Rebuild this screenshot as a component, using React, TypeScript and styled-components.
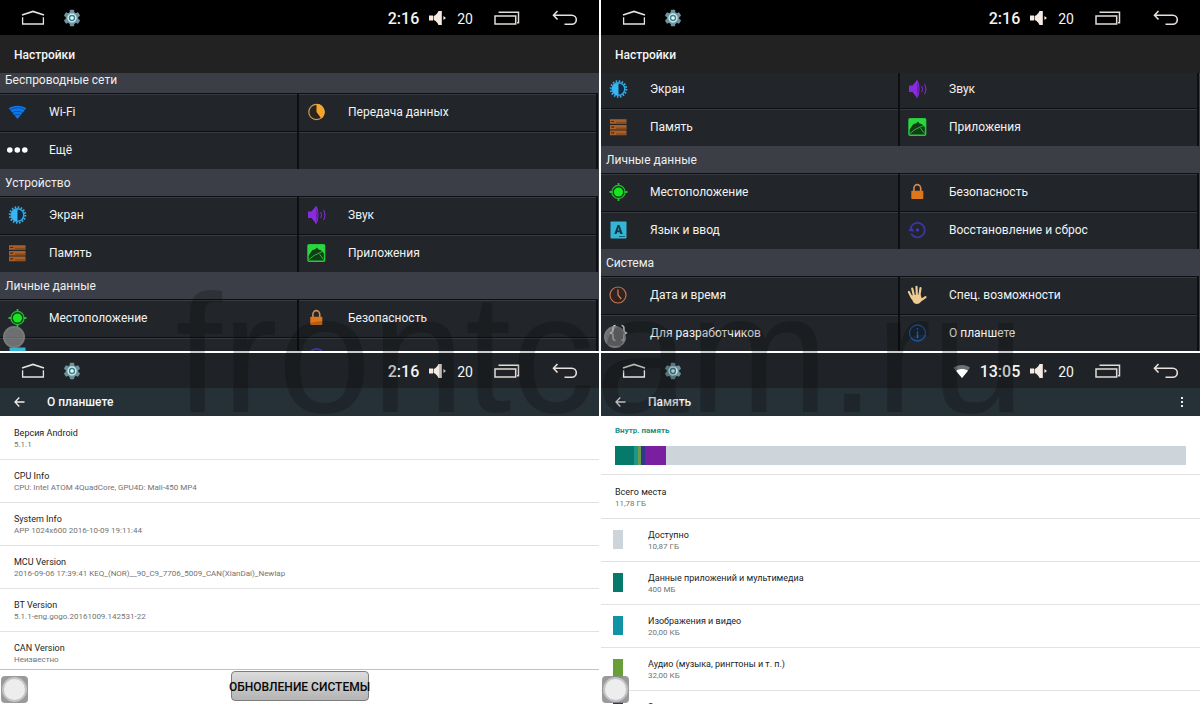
import React from "react";
import styled, { createGlobalStyle } from "styled-components";

const GlobalStyle = createGlobalStyle`
  * { box-sizing: border-box; }
  body { margin: 0; background: #fff; font-family: Roboto, "Liberation Sans", sans-serif; }
  button { font: inherit; color: inherit; background: none; border: 0; padding: 0; margin: 0; text-align: left; cursor: pointer; }
  h1, h2, dl, dt, dd, ul { margin: 0; padding: 0; font-weight: inherit; list-style: none; }
  svg { display: block; flex: none; }
`;

/* ---------- layout ---------- */

const Board = styled.main`
  position: relative;
  display: grid;
  grid-template-columns: repeat(2, minmax(0, 1fr));
  grid-template-rows: repeat(2, minmax(0, 1fr));
  gap: 2px;
  height: 100vh;
  overflow: hidden;
`;

const Pane = styled.section<{ $light?: boolean }>`
  position: relative;
  display: flex;
  flex-direction: column;
  min-height: 0;
  overflow: hidden;
  background: ${(p) => (p.$light ? "#fff" : "#22262a")};
`;

const Watermark = styled.div`
  position: absolute;
  top: 270px;
  left: 0;
  right: 0;
  z-index: 5;
  text-align: center;
  font: 168px/168px "Liberation Sans", sans-serif;
  color: rgba(0, 0, 0, 0.2);
  pointer-events: none;
`;

/* ---------- status bar ---------- */

const StatusBar = styled.header<{ $light?: boolean }>`
  display: flex;
  align-items: center;
  flex: none;
  height: 35px;
  padding: 0 21px;
  background: ${(p) => (p.$light ? "#1f2327" : "#000")};
  color: #f4f4f4;
`;

const StatusGroup = styled.div<{ $gap: number }>`
  display: flex;
  align-items: center;
  gap: ${(p) => p.$gap}px;
`;

const Spacer = styled.div`
  flex: 1;
`;

const Clock = styled.time`
  padding-top: 2px;
  font-size: 16px;
  line-height: 20px;
  font-weight: 500;
`;

const Volume = styled.span`
  margin-right: 21px;
  padding-top: 2px;
  font-size: 14px;
  line-height: 20px;
`;

/* ---------- title bars ---------- */

const TitleBar = styled.div<{ $compact?: boolean }>`
  display: flex;
  align-items: center;
  flex: none;
  height: ${(p) => (p.$compact ? 28 : 38)}px;
  padding: ${(p) => (p.$compact ? 0 : 2)}px 16px 0 14px;
  background: ${(p) => (p.$compact ? "#263037" : "#222")};
  color: #f6f6f6;
`;

const Title = styled.h1`
  flex: 1;
  font-size: 12px;
  line-height: 16px;
  font-weight: 500;
`;

const BackSlot = styled.button`
  width: 33px;
`;

/* ---------- settings grid ---------- */

const SettingsList = styled.div<{ $scroll: number }>`
  flex: 1;
  min-height: 0;
  overflow: hidden;

  & > :first-child {
    margin-top: -${(p) => p.$scroll}px;
  }
`;

const SectionHeader = styled.h2`
  height: 27px;
  padding-left: 5px;
  background: #3b3e47;
  color: #eee;
  font-size: 12px;
  line-height: 29px;
`;

const CellGrid = styled.div`
  display: grid;
  grid-template-columns: 1fr 1fr;
  padding-right: 1px;
  background: #3b3e47;
`;

const Cell = styled.button`
  display: flex;
  align-items: center;
  gap: 21px;
  height: 38px;
  padding: 0 0 2px 6px;
  border: solid #0e0f11;
  border-width: 1px 2px 0 0;
  box-shadow: inset 0 1px #373b3f;
  background: #22262a;
  color: #f2f2f2;
  font-size: 12px;
  line-height: 16px;
`;

/* ---------- light lists ---------- */

const InfoList = styled.dl`
  flex: 1;
  min-height: 0;
  padding-top: 1px;
  overflow: hidden;
`;

const Row = styled.div<{ $indent?: boolean }>`
  display: flex;
  align-items: center;
  height: 43px;
  padding-left: ${(p) => (p.$indent ? 12 : 14)}px;
  border-bottom: 1px solid #e2e2e2;
`;

const RowText = styled.div`
  padding-top: 2px;
`;

const RowTitle = styled.dt`
  color: #1c1c1c;
  font-size: 9px;
  line-height: 12px;
`;

const RowValue = styled.dd`
  color: #737373;
  font-size: 8px;
  line-height: 12px;
`;

const Swatch = styled.span<{ $color: string }>`
  width: 10px;
  height: 19px;
  margin: 0 25px 2px 0;
  background: ${(p) => p.$color};
`;

const Footer = styled.footer`
  display: flex;
  justify-content: center;
  flex: none;
  height: 35px;
  padding: 1px 0 3px;
  border-top: 1px solid #c2c2c2;
`;

const UpdateButton = styled.button`
  display: flex;
  align-items: center;
  justify-content: center;
  width: 138px;
  padding-top: 2px;
  border: 1px solid #7d7d7d;
  border-radius: 4px;
  background: linear-gradient(#dcdcdc, #b4b4b4);
  color: #080808;
  font-size: 12px;
  line-height: 16px;
  font-weight: 500;
  white-space: nowrap;
`;

const MemorySummary = styled.div`
  flex: none;
  height: 59px;
  padding: 9px 14px 0;
  border-bottom: 1px solid #e2e2e2;
`;

const MemoryLabel = styled.h2`
  margin-bottom: 9px;
  color: #1c8f86;
  font-size: 8px;
  line-height: 12px;
  font-weight: 700;
`;

const MemoryBar = styled.div`
  display: flex;
  height: 19px;
`;

const Segment = styled.span<{ $color: string }>`
  flex-basis: 0;
  background: ${(p) => p.$color};
`;

/* ---------- floating assist control ---------- */

const AssistDot = styled.button`
  position: absolute;
  left: 3px;
  bottom: 3px;
  width: 22px;
  height: 22px;
  border: 2px solid rgba(130, 130, 130, 0.5);
  border-radius: 50%;
  background: rgba(160, 160, 160, 0.6);
`;

const AssistPad = styled.button`
  position: absolute;
  left: 1px;
  bottom: 1px;
  display: grid;
  place-items: center;
  width: 27px;
  height: 27px;
  border-radius: 4px;
  background: rgba(140, 140, 140, 0.88);

  &::before {
    content: "";
    width: 21px;
    height: 21px;
    border: 2px solid #c4c4c4;
    border-radius: 50%;
    background: #ededed;
  }
`;

/* ---------- icons ---------- */

const HomeIcon = () => (
  <svg width="24" height="16" viewBox="0 0 24 16" fill="none" stroke="#e4e4e4" strokeWidth="1.3">
    <path d="M1 5 12 1.4 23 5" strokeWidth="1.6" />
    <path d="M1.6 7.2V14h20.8V7.2" />
  </svg>
);

const GearIcon = () => (
  <svg width="18" height="18" viewBox="0 0 18 18">
    <g fill="#70929d">
      {[0, 60, 120].map((a) => (
        <rect key={a} x="6.8" y="0.8" width="4.4" height="16.4" rx="0.8" transform={`rotate(${a} 9 9)`} />
      ))}
      <circle cx="9" cy="9" r="6.3" />
    </g>
    <circle cx="9" cy="9" r="3.9" fill="#3f7f8b" stroke="#c5ecf0" strokeWidth="1.5" />
    <circle cx="9" cy="9" r="1.8" fill="#e6fbfc" />
  </svg>
);

const SpeakerIcon = () => (
  <svg width="18" height="16" viewBox="0 0 18 16" fill="#f6ebe4">
    <path d="M0 5.4h4v5.2H0zM4.6 6C7 5 8.400 3.500 9.500 1h3.300v14H9.500c-1.100-2.500-2.500-4-4.900-5zM14.400 6l2.600 2-2.600 2z" />
  </svg>
);

const RecentsIcon = () => (
  <svg width="26" height="16" viewBox="0 0 26 16" fill="none" stroke="#e2dcd8" strokeWidth="1.5">
    <path d="M1 6.100h20.700V14H1z" />
    <path d="M4.500 2.200h20V12.700h-1.500" />
  </svg>
);

const ReturnIcon = () => (
  <svg width="26" height="18" viewBox="0 0 26 18" fill="none" stroke="#e8e0dc" strokeWidth="1.6">
    <path d="M5.500 2 1.500 6.300 5.500 10.500M1.800 6.300h18a4.500 4.500 0 0 1 0 9h-7.300" />
  </svg>
);

const WifiStatusIcon = () => (
  <svg width="18" height="16" viewBox="0 0 18 16">
    <path d="M10 15 1.500 4.700C6 1.200 14 1.200 18 4.700z" fill="#6c7174" />
    <path d="M10 15 4 7.800C7.500 5.400 12.500 5.400 16 7.800z" fill="#fff" />
  </svg>
);

const ArrowIcon = () => (
  <svg width="12" height="12" viewBox="0 0 12 12" fill="none" stroke="#eee" strokeWidth="1.3">
    <path d="M5.300 1.500 1 6l4.300 4.500M1 6h9.500" />
  </svg>
);

const MoreIcon = () => (
  <svg width="4" height="12" viewBox="0 0 4 12" fill="#eee">
    <path d="M1 1h2v2H1zM1 5h2v2H1zM1 9h2v2H1z" />
  </svg>
);

const icons: Record<string, React.ReactNode> = {
  wifi: (
    <>
      <path d="M11.500 18 2.700 7.200C7 3.800 16 3.800 20.300 7.200z" fill="#0a78ee" />
      <path d="M4.200 9C8.500 6 14.500 6 18.800 9M6.400 11.700c3-1.900 7.200-1.900 10.200 0M8.600 14.200c1.800-1 4-1 5.800 0" stroke="#123f80" fill="none" strokeWidth="0.8" />
    </>
  ),
  dots: (
    <g fill="#fff">
      <circle cx="3.800" cy="11" r="2.800" />
      <circle cx="11.300" cy="11" r="2.800" />
      <circle cx="18.800" cy="11" r="2.800" />
    </g>
  ),
  data: (
    <>
      <circle cx="11.500" cy="11" r="7.700" fill="#2a241d" stroke="#c99d5c" strokeWidth="1.200" />
      <path d="M11.500 11V3a8 8 0 0 1 4.800 14.400z" fill="#f5a42c" />
    </>
  ),
  display: (
    <>
      <circle cx="11.500" cy="11" r="7.800" fill="none" stroke="#3cb0e6" strokeWidth="2" strokeDasharray="1.530 1.530" />
      <circle cx="11.500" cy="11" r="6.300" fill="#0e2b45" stroke="#2fa6e2" strokeWidth="1.500" />
      <path d="M11.500 4.700a6.300 6.300 0 0 0 0 12.600z" fill="#3ab4f2" />
    </>
  ),
  sound: (
    <>
      <path d="M3 7.500h3.500v6.500H3zM6.500 7.500 11 2.200v17.600L6.500 14z" fill="#8a2be0" />
      <path d="M11 2.500c2.600 3 2.600 14 0 17z" fill="#4b1780" stroke="#8a2be0" strokeWidth="1" />
      <path d="M15.500 8.200c1.200 1.500 1.200 4.300 0 5.800M18.400 6c2 2.600 2 7.600 0 10.200" fill="none" stroke="#7d2ac4" strokeWidth="1.200" />
    </>
  ),
  memory: (
    <>
      <path d="M3 3.200h16.500v4.600H3zM3 8.900h16.500v4.600H3zM3 14.600h16.500v4.600H3z" fill="#a9602a" />
      <path d="M4.200 5.500h3M4.200 11.200h3M4.200 16.900h3" stroke="#4f2609" strokeWidth="1.200" />
      <path d="M9 6.500h10M9 12.200h10M9 17.900h10" stroke="#8b4a16" strokeWidth="1.500" />
    </>
  ),
  apps: (
    <>
      <rect x="3" y="2.700" width="16.600" height="16.600" rx="1" fill="#123d17" stroke="#27c93b" strokeWidth="1.500" />
      <path d="M3 3h16.500v9L16 8.200l-2.500-.8-1.500-2-1.800 1.800-3 1L3 14.500z" fill="#2bd63f" />
      <path d="M4 17.500 9 13.500l8.500-4M14.500 12l4 5.500" stroke="#27c93b" strokeWidth="0.900" fill="none" />
    </>
  ),
  location: (
    <>
      <circle cx="11.500" cy="11" r="6.600" fill="#0d3d12" stroke="#2fb83a" strokeWidth="1.200" />
      <circle cx="11.500" cy="11" r="4.600" fill="#18e522" />
      <path d="M11.500 2v3M11.500 17v3M2.500 11h3M17.500 11h3" stroke="#2fb83a" strokeWidth="1.800" />
    </>
  ),
  lock: (
    <>
      <path d="M7.900 11V7.300a3.400 3.700 0 0 1 6.800 0V11" fill="none" stroke="#d38a52" strokeWidth="1.600" />
      <rect x="5.300" y="9.800" width="12" height="8.300" rx="0.800" fill="#e0761a" />
    </>
  ),
  language: (
    <>
      <rect x="3.500" y="2.500" width="16" height="17" rx="0.800" fill="#35b5d6" />
      <path d="M7.300 15 10.500 6h2l3.200 9h-2.400l-.5-1.700h-2.700L9.600 15zm3.400-3.500h1.600L11.500 8.700z" fill="#123847" fillRule="evenodd" />
      <path d="M12 17.500h6" stroke="#17627a" />
    </>
  ),
  restore: (
    <>
      <path d="M5.300 14.800A7.200 7.200 0 1 0 4.500 9.500" fill="none" stroke="#3a36a6" strokeWidth="1.700" />
      <path d="M2.300 12 5.300 7.500l3.200 5z" fill="#3a36a6" />
      <circle cx="11.500" cy="11" r="1.700" fill="#3d39b0" />
    </>
  ),
  clock: (
    <>
      <circle cx="11" cy="11" r="8" fill="#2e2320" stroke="#c27350" strokeWidth="1.200" />
      <path d="M11 5.500V11l3.200 4" fill="none" stroke="#d07a50" strokeWidth="1.300" />
    </>
  ),
  hand: (
    <>
      <g stroke="#efcb94" strokeLinecap="round" strokeWidth="2.200" fill="none">
        <path d="M8 12 6.200 4.600M10.800 11 10.500 2.800M13.300 12 14.500 4.200M6 14 2.900 8M14.500 16.500 19.500 13.200" />
      </g>
      <path d="M4.900 11.500 14.400 10.500 15.800 14.500c0 2.500-2 5.500-5 5.500s-4.800-3-5.900-8.500z" fill="#efcb94" />
    </>
  ),
  code: (
    <path d="M8.500 3.500C4.500 3.500 7 9 5.500 10L3.800 11l1.700 1c1.500 1-1 6.500 3 6.500M14.500 3.500c4 0 1.500 5.500 3 6.500l1.700 1-1.700 1c-1.500 1 1 6.500-3 6.500" fill="none" stroke="#dcdcdc" strokeWidth="1.600" />
  ),
  info: (
    <>
      <circle cx="11.500" cy="11" r="8" fill="#192736" stroke="#1f58a0" strokeWidth="1.300" />
      <path d="M11.500 6v1.800M11.500 9.300V16" stroke="#2c64ab" strokeWidth="1.500" />
    </>
  ),
};

const CellIcon = ({ name }: { name: string }) => (
  <svg width="22" height="22" viewBox="0 0 22 22" aria-hidden="true">
    {icons[name]}
  </svg>
);

/* ---------- composed parts ---------- */

const Status = ({ time, light, wifi }: { time: string; light?: boolean; wifi?: boolean }) => (
  <StatusBar $light={light}>
    <StatusGroup $gap={18}>
      <button aria-label="Домой"><HomeIcon /></button>
      <button aria-label="Настройки"><GearIcon /></button>
    </StatusGroup>
    <Spacer />
    <StatusGroup $gap={10}>
      {wifi && <WifiStatusIcon />}
      <Clock>{time}</Clock>
      <SpeakerIcon />
      <Volume>20</Volume>
    </StatusGroup>
    <StatusGroup $gap={32}>
      <button aria-label="Недавние"><RecentsIcon /></button>
      <button aria-label="Назад"><ReturnIcon /></button>
    </StatusGroup>
  </StatusBar>
);

type Item = [icon: string, label: string];
type Group = { title?: string; items: Item[] };

const SettingsPane = ({ groups, scroll }: { groups: Group[]; scroll: number }) => (
  <Pane>
    <Status time="2:16" />
    <TitleBar><Title>Настройки</Title></TitleBar>
    <SettingsList $scroll={scroll}>
      {groups.map((g, i) => (
        <div key={i}>
          {g.title && <SectionHeader>{g.title}</SectionHeader>}
          <CellGrid>
            {g.items.map(([icon, label], j) =>
              label || icon ? (
                <Cell key={j} aria-label={label ? undefined : icon}>
                  <CellIcon name={icon} />
                  {label}
                </Cell>
              ) : (
                <Cell as="div" key={j} />
              )
            )}
          </CellGrid>
        </div>
      ))}
    </SettingsList>
    <AssistDot aria-label="Меню" />
  </Pane>
);

const device: Item[] = [
  ["display", "Экран"],
  ["sound", "Звук"],
  ["memory", "Память"],
  ["apps", "Приложения"],
];

const location: Item[] = [
  ["location", "Местоположение"],
  ["lock", "Безопасность"],
];

const about = [
  ["Версия Android", "5.1.1"],
  ["CPU Info", "CPU: Intel ATOM 4QuadCore, GPU4D: Mali-450 MP4"],
  ["System Info", "APP 1024x600 2016-10-09 19:11:44"],
  ["MCU Version", "2016-09-06 17:39:41 KEQ_(NOR)__90_C9_7706_5009_CAN(XianDai)_Newlap"],
  ["BT Version", "5.1.1-eng.gogo.20161009.142531-22"],
  ["CAN Version", "Неизвестно"],
];

const usage: [share: number, color: string][] = [
  [19, "#067a6a"],
  [4, "#1d968c"],
  [3, "#6f9a4c"],
  [4, "#2c3a8c"],
  [21, "#7a1fa0"],
  [520, "#cdd4da"],
];

const storage = [
  ["#cdd4da", "Доступно", "10,87 ГБ"],
  ["#067a6a", "Данные приложений и мультимедиа", "400 МБ"],
  ["#0e94a4", "Изображения и видео", "20,00 КБ"],
  ["#689f38", "Аудио (музыка, рингтоны и т. п.)", "32,00 КБ"],
  ["#283593", "Загрузки", ""],
];

export default function App() {
  return (
    <>
      <GlobalStyle />
      <Board>
        <SettingsPane
          scroll={7}
          groups={[
            {
              title: "Беспроводные сети",
              items: [["wifi", "Wi-Fi"], ["data", "Передача данных"], ["dots", "Ещё"], ["", ""]],
            },
            { title: "Устройство", items: device },
            { title: "Личные данные", items: [...location, ["language", ""], ["restore", ""]] },
          ]}
        />
        <SettingsPane
          scroll={3}
          groups={[
            { items: device },
            {
              title: "Личные данные",
              items: [...location, ["language", "Язык и ввод"], ["restore", "Восстановление и сброс"]],
            },
            {
              title: "Система",
              items: [
                ["clock", "Дата и время"],
                ["hand", "Спец. возможности"],
                ["code", "Для разработчиков"],
                ["info", "О планшете"],
              ],
            },
          ]}
        />

        <Pane $light>
          <Status time="2:16" light />
          <TitleBar $compact>
            <BackSlot aria-label="Вернуться"><ArrowIcon /></BackSlot>
            <Title>О планшете</Title>
          </TitleBar>
          <InfoList>
            {about.map(([k, v]) => (
              <Row key={k}>
                <RowText>
                  <RowTitle>{k}</RowTitle>
                  <RowValue>{v}</RowValue>
                </RowText>
              </Row>
            ))}
          </InfoList>
          <Footer>
            <UpdateButton>ОБНОВЛЕНИЕ СИСТЕМЫ</UpdateButton>
          </Footer>
          <AssistPad aria-label="Меню" />
        </Pane>

        <Pane $light>
          <Status time="13:05" light wifi />
          <TitleBar $compact>
            <BackSlot aria-label="Вернуться"><ArrowIcon /></BackSlot>
            <Title>Память</Title>
            <button aria-label="Ещё"><MoreIcon /></button>
          </TitleBar>
          <MemorySummary>
            <MemoryLabel>Внутр. память</MemoryLabel>
            <MemoryBar>
              {usage.map(([share, color]) => (
                <Segment key={color} $color={color} style={{ flexGrow: share }} />
              ))}
            </MemoryBar>
          </MemorySummary>
          <InfoList>
            <Row>
              <RowText>
                <RowTitle>Всего места</RowTitle>
                <RowValue>11,78 ГБ</RowValue>
              </RowText>
            </Row>
            {storage.map(([color, k, v]) => (
              <Row key={k} $indent>
                <Swatch $color={color} />
                <RowText>
                  <RowTitle>{k}</RowTitle>
                  <RowValue>{v || "\u00a0"}</RowValue>
                </RowText>
              </Row>
            ))}
          </InfoList>
          <AssistPad aria-label="Меню" />
        </Pane>
        <Watermark aria-hidden="true">frontcam.ru</Watermark>
      </Board>
    </>
  );
}
